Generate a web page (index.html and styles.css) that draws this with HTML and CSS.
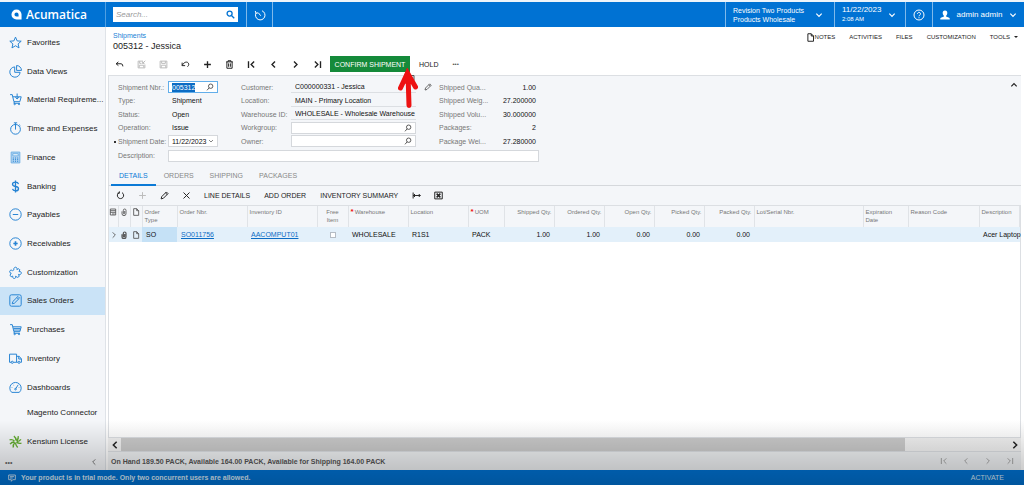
FILE: index.html
```html
<!DOCTYPE html>
<html lang="en">
<head>
<meta charset="utf-8">
<title>005312 - Jessica</title>
<link rel="stylesheet" href="styles.css">
</head>
<body>
<svg class="defs" aria-hidden="true">
  <symbol id="chev-down" viewBox="0 0 12 12"><path d="M2 4l4 4 4-4"/></symbol>
  <symbol id="chev-left" viewBox="0 0 12 12"><path d="M8 2L4 6l4 4"/></symbol>
  <symbol id="chev-right" viewBox="0 0 12 12"><path d="M4 2l4 4-4 4"/></symbol>
  <symbol id="first" viewBox="0 0 12 12"><path d="M2 1.500v9M9.500 2L5.500 6l4 4"/></symbol>
  <symbol id="last" viewBox="0 0 12 12"><path d="M10 1.500v9M2.500 2l4 4-4 4"/></symbol>
  <symbol id="plus" viewBox="0 0 12 12"><path d="M6 1.500v9M1.500 6h9"/></symbol>
  <symbol id="cross" viewBox="0 0 12 12"><path d="M2 2l8 8M10 2l-8 8"/></symbol>
  <symbol id="lens" viewBox="0 0 12 12"><circle cx="7" cy="4.800" r="3.300"/><path d="M4.700 7.200L1.500 11"/></symbol>
  <symbol id="page" viewBox="0 0 12 12"><path d="M2.500 1h4.500l3 3v7H2.500zM7 1v3h3"/></symbol>
  <symbol id="pencil" viewBox="0 0 12 12"><path d="M1.500 10.500l.8-3L8.500 1.300l2.200 2.200L4.500 9.700zM7.300 2.500l2.200 2.200"/></symbol>
  <symbol id="clip" viewBox="0 0 12 12"><path d="M3 5v3.500a3 3 0 0 0 6 0V3.500a2 2 0 0 0-4 0V8a1 1 0 0 0 2 0V4.500"/></symbol>
  <symbol id="cart" viewBox="0 0 24 24"><path d="M2 3h4l3 13h11l2.500-9H7M10 16l-1 3h11"/><circle cx="10.500" cy="20.500" r="1.200"/><circle cx="18.500" cy="20.500" r="1.200"/></symbol>
</svg>

<header class="topbar">
  <a class="brand" href="#">
    <svg class="brand-mark" viewBox="0 0 24 24"><path fill="#fff" fill-rule="evenodd" d="M12 1a11 11 0 0 1 11 11v11H12A11 11 0 0 1 12 1zm0 6.500a4.500 4.500 0 1 0 0 9h4.500V12A4.500 4.500 0 0 0 12 7.500z"/></svg>
    <span>Acumatica</span>
  </a>
  <form class="search">
    <input type="search" placeholder="Search..." aria-label="Search">
    <svg class="ico search-ico" viewBox="0 0 12 12"><circle cx="4.800" cy="4.800" r="3.300"/><path d="M7.300 7.300L11 11"/></svg>
  </form>
  <button class="bar-btn history" aria-label="History"><svg class="ico i12" viewBox="0 0 24 24"><path d="M4 8a9.500 9.500 0 1 0 12-4.500M2.500 4L4 8.500 8.500 7.500M9 8l4.500 5.500"/></svg></button>
  <span class="spacer"></span>
  <button class="bar-btn tenant"><span>Revision Two Products<br>Products Wholesale</span><svg class="ico bold i8"><use href="#chev-down"/></svg></button>
  <button class="bar-btn date"><span>11/22/2023<br><small>2:08 AM</small></span><svg class="ico bold i8"><use href="#chev-down"/></svg></button>
  <button class="bar-btn help" aria-label="Help"><svg class="ico i12" viewBox="0 0 24 24"><circle cx="12" cy="12" r="10"/><path d="M9 9.500a3 3 0 1 1 4.500 2.700c-1 .6-1.500 1-1.500 2.300M12 16.500v2"/></svg></button>
  <button class="bar-btn user"><svg class="i10" viewBox="0 0 24 24"><path fill="#fff" d="M12 1c4 0 6 3 5.500 6.500C17 11 15.500 13 14.500 14v1.500L22 18.500c1 .5 1.500 2 1.500 4.500H.5c0-2.500.5-4 1.500-4.500l7.500-3V14C8.500 13 7 11 6.500 7.500 6 4 8 1 12 1z"/></svg><span>admin admin</span><svg class="ico bold i8"><use href="#chev-down"/></svg></button>
</header>

<div class="shell">
  <nav class="side">
    <ul>
      <li><a href="#"><svg class="ico" viewBox="0 0 24 24"><path d="M12 2l3 7 7.500.6-5.700 5 1.700 7.400L12 18l-6.500 4 1.700-7.400-5.700-5L9 9z"/></svg>Favorites</a></li>
      <li><a href="#"><svg class="ico" viewBox="0 0 24 24"><path d="M10.500 3.500a9.500 9.500 0 1 0 10 10M10.500 3.500v10h10M14 1a9 9 0 0 1 9 9h-9z"/></svg>Data Views</a></li>
      <li><a href="#"><svg class="ico" viewBox="0 0 24 24"><use href="#cart"/><path d="M15 1v10M11.500 7.500L15 11l3.500-3.500"/></svg>Material Requireme...</a></li>
      <li><a href="#"><svg class="ico" viewBox="0 0 24 24"><circle cx="12" cy="13.500" r="9"/><path d="M9 1.500h6M12 2v12M19 5l2 2"/></svg>Time and Expenses</a></li>
      <li><a href="#"><svg class="ico" viewBox="0 0 24 24"><path fill="#b5d5f1" stroke="#6fb0e4" d="M4 2h16v20H4z"/><path fill="#f4f9fd" stroke="#6fb0e4" d="M7 5h10v4H7z"/><path d="M7 13h2m2 0h2m2 0h2M7 16h2m2 0h2m2 0h2M7 19h2m2 0h2m2 0h2"/></svg>Finance</a></li>
      <li><a href="#"><svg class="ico" viewBox="0 0 24 24"><path stroke-width="2.500" d="M12 1v22M17.500 7.500c-.5-2-2.500-3.500-5.500-3.500s-5.500 1.500-5.500 4 2 3.500 5.500 4 5.500 1.500 5.500 4-2.500 4-5.500 4-5-1.500-5.500-3.500"/></svg>Banking</a></li>
      <li><a href="#"><svg class="ico" viewBox="0 0 24 24"><circle cx="12" cy="12" r="10.500"/><path d="M7 12h10"/></svg>Payables</a></li>
      <li><a href="#"><svg class="ico" viewBox="0 0 24 24"><circle cx="12" cy="12" r="10.500"/><path d="M8 12h8M12 8v8" stroke-width="3"/></svg>Receivables</a></li>
      <li><a href="#"><svg class="ico" viewBox="0 0 24 24"><path d="M9 7c-1-4 3-6 5-4 1 1 1 2 .5 3.500L18 5l2 2-1.500 3.500c3-1 5 1 4 3.500s-4 2-5 1.500L19 19l-3 2-4-2c1 3-1 4.500-3 4s-2.500-2.500-2-4.500L4 20l-2-3 2-4c-3 0-3.500-3-2-4.500S6 7.500 6.500 9z"/></svg>Customization</a></li>
      <li class="current"><a href="#"><svg class="ico" viewBox="0 0 24 24"><rect x="1.500" y="1.500" width="21" height="21" rx="3"/><path d="M6 18l1-4 9.500-9.500 3 3L10 17zM14.500 6.500l3 3"/></svg>Sales Orders</a></li>
      <li><a href="#"><svg class="ico" viewBox="0 0 24 24"><use href="#cart"/><path d="M8 10h13M9 13h12"/></svg>Purchases</a></li>
      <li><a href="#"><svg class="ico" viewBox="0 0 24 24"><path d="M4 19H1V4h13v15H8M14 8h5l4 5v6h-2M14 19h2M18 8v5h5"/><circle cx="6" cy="19" r="2"/><circle cx="18.500" cy="19" r="2"/></svg>Inventory</a></li>
      <li><a href="#"><svg class="ico" viewBox="0 0 24 24"><path d="M5 21a10.500 10.500 0 1 1 14 0zM17 7l-4.500 7"/><circle cx="12" cy="15" r="1.500"/><path d="M5 12h1M8 7l.5 1M19 12h-1"/></svg>Dashboards</a></li>
      <li class="short"><a href="#">Magento Connector</a></li>
      <li class="tall"><a href="#"><svg class="ico kensium" viewBox="0 0 24 24"><path d="M13 10c0-4-1-6-4-8M14 11c3-3 4-5 3-9M14 12c4 0 6-1 8-4M14 13c3 3 5 3 9 2M12 14c0 4 1 6 4 9M11 14c-3 3-4 5-3 9M10 13c-4 0-6 1-8 4M10 11c-3-3-5-3-9-2"/></svg>Kensium License</a></li>
    </ul>
    <div class="side-foot"><button aria-label="More">•••</button><button aria-label="Collapse"><svg class="ico i8"><use href="#chev-left"/></svg></button></div>
  </nav>

  <main>
    <div class="heading">
      <div>
        <a class="crumb" href="#">Shipments</a>
        <h1>005312 - Jessica</h1>
      </div>
      <div class="links">
        <button><svg class="ico i9"><use href="#page"/></svg>NOTES</button>
        <button>ACTIVITIES</button>
        <button>FILES</button>
        <button>CUSTOMIZATION</button>
        <button>TOOLS <span class="caret"></span></button>
      </div>
    </div>

    <div class="tools">
      <button aria-label="Back"><svg class="ico" viewBox="0 0 12 12"><path d="M4.500 2.500L1.500 5l3 2.500M1.500 5H8q2.500 0 2.500 3.500"/></svg></button>
      <button aria-label="Save and close" disabled><svg class="ico" viewBox="0 0 12 12"><path d="M8 1.500H1.500v9h9V6M3.500 1.500v3H6M3 10V7h6v3M11 1L7.500 4.500M7.500 2v2.500H10"/></svg></button>
      <button aria-label="Save" disabled><svg class="ico" viewBox="0 0 12 12"><path d="M1.500 1.500h9v9h-9zM3.500 1.500v3h5v-3M3 10.500V7h6v3.500"/></svg></button>
      <button aria-label="Undo"><svg class="ico" viewBox="0 0 12 12"><path d="M1.500 3.500v4h4M1.500 7.500C4 2 9 1.500 10.200 5c.5 2-.7 3-1.700 4"/></svg></button>
      <button aria-label="Add"><svg class="ico bold"><use href="#plus"/></svg></button>
      <button aria-label="Delete"><svg class="ico" viewBox="0 0 12 12"><path d="M1.500 2.500h9M4 2.500V1h4v1.500M2.500 2.500V11h7V2.500M4.800 4.500V9M7.200 4.500V9"/></svg></button>
      <button aria-label="First"><svg class="ico bold"><use href="#first"/></svg></button>
      <button aria-label="Previous"><svg class="ico bold"><use href="#chev-left"/></svg></button>
      <button aria-label="Next"><svg class="ico bold"><use href="#chev-right"/></svg></button>
      <button aria-label="Last"><svg class="ico bold"><use href="#last"/></svg></button>
      <span class="confirm-wrap">
        <button class="confirm">CONFIRM SHIPMENT</button>
        <svg class="pointer" viewBox="0 0 20 42"><path d="M11 7.500h5v5" fill="none" stroke="#555"/><path d="M10 6l1 31.500M2.500 20L9.500 5l8 14" fill="none" stroke="#ed1212" stroke-width="5" stroke-linecap="round"/><path d="M9 0l8 15-14 1z" fill="#ed1212"/></svg>
      </span>
      <button class="text">HOLD</button>
      <button class="text more" aria-label="More actions">•••</button>
    </div>

    <form class="summary">
      <div class="fields">
        <label for="nbr">Shipment Nbr.:</label>
        <div class="box focus"><input id="nbr" value="005312"><svg class="ico i8"><use href="#lens"/></svg></div>
        <label class="c2" for="cust">Customer:</label>
        <div class="ro"><input id="cust" value="C000000331 - Jessica" readonly></div>
        <button class="edit" type="button" aria-label="Edit customer"><svg class="ico i8"><use href="#pencil"/></svg></button>
        <span class="c3">Shipped Qua...</span><output>1.00</output>

        <span class="c1">Type:</span><span class="value">Shipment</span>
        <label class="c2" for="loc">Location:</label>
        <div class="ro"><input id="loc" value="MAIN - Primary Location" readonly></div>
        <span class="c3">Shipped Weig...</span><output>27.200000</output>

        <span class="c1">Status:</span><span class="value">Open</span>
        <label class="c2" for="wh">Warehouse ID:</label>
        <div class="ro"><input id="wh" value="WHOLESALE - Wholesale Warehouse" readonly></div>
        <span class="c3">Shipped Volu...</span><output>30.000000</output>

        <span class="c1">Operation:</span><span class="value">Issue</span>
        <label class="c2" for="wg">Workgroup:</label>
        <div class="box"><input id="wg"><svg class="ico i8"><use href="#lens"/></svg></div>
        <span class="c3">Packages:</span><output>2</output>

        <label class="required" for="sdate">Shipment Date:</label>
        <div class="box"><input id="sdate" value="11/22/2023"><svg class="ico i6"><use href="#chev-down"/></svg></div>
        <label class="c2" for="own">Owner:</label>
        <div class="box"><input id="own"><svg class="ico i8"><use href="#lens"/></svg></div>
        <span class="c3">Package Wei...</span><output>27.280000</output>

        <label for="desc">Description:</label>
        <div class="box wide"><input id="desc"></div>
      </div>
      <button class="fold" type="button" aria-label="Collapse summary"><svg class="ico bold i8" viewBox="0 0 12 12"><path d="M2 8l4-4 4 4"/></svg></button>
    </form>

    <div class="tabs" role="tablist">
      <button role="tab" aria-selected="true">DETAILS</button>
      <button role="tab" aria-selected="false">ORDERS</button>
      <button role="tab" aria-selected="false">SHIPPING</button>
      <button role="tab" aria-selected="false">PACKAGES</button>
    </div>

    <div class="tools grid-tools">
      <button aria-label="Refresh"><svg class="ico" viewBox="0 0 12 12"><path d="M8 2.200A4.200 4.200 0 1 1 4 2.200M4.500 .5v2.500H2"/></svg></button>
      <button aria-label="Add row" disabled><svg class="ico"><use href="#plus"/></svg></button>
      <button aria-label="Edit row"><svg class="ico"><use href="#pencil"/></svg></button>
      <button aria-label="Delete row"><svg class="ico"><use href="#cross"/></svg></button>
      <button class="text">LINE DETAILS</button>
      <button class="text">ADD ORDER</button>
      <button class="text">INVENTORY SUMMARY</button>
      <button aria-label="Fit columns"><svg class="ico" viewBox="0 0 12 12"><path d="M1.500 2v8M2 6h9M4 4L2 6l2 2M9 4l2 2-2 2"/></svg></button>
      <button aria-label="Export to Excel"><svg class="ico" viewBox="0 0 12 12"><path d="M1 1.500h10v9H1z"/><path stroke-width="2" d="M3.500 3.500l5 5M8.500 3.500l-5 5"/></svg></button>
    </div>

    <div class="grid">
      <table>
        <colgroup><col class="w9"><col class="w12"><col class="w12"><col class="w35"><col class="w70"><col class="w70"><col class="w31"><col class="w60"><col class="w60"><col class="w36"><col class="w50"><col class="w50"><col class="w50"><col class="w50"><col class="w50"><col class="w109"><col class="w45"><col class="w71"><col></colgroup>
        <thead><tr>
          <th class="mini"><svg class="ico i8" viewBox="0 0 12 12"><path d="M2 1.500h8v9H2zM2 4h8M2 6.500h8M4.500 9h4"/></svg></th>
          <th class="mini"><svg class="ico i8"><use href="#clip"/></svg></th>
          <th class="mini"><svg class="ico i8"><use href="#page"/></svg></th>
          <th>Order<br>Type</th><th>Order Nbr.</th><th>Inventory ID</th><th class="mid">Free<br>Item</th>
          <th><b>*</b>Warehouse</th><th>Location</th><th><b>*</b>UOM</th>
          <th class="num">Shipped Qty.</th><th class="num">Ordered Qty.</th><th class="num">Open Qty.</th><th class="num">Picked Qty.</th><th class="num">Packed Qty.</th>
          <th>Lot/Serial Nbr.</th><th>Expiration<br>Date</th><th>Reason Code</th><th>Description</th>
        </tr></thead>
        <tbody><tr>
          <td class="mini"><svg class="ico i8"><use href="#chev-right"/></svg></td>
          <td class="mini"><svg class="ico bold i8"><use href="#clip"/></svg></td>
          <td class="mini"><svg class="ico i8"><use href="#page"/></svg></td>
          <td class="cell-on">SO</td><td><a href="#">SO011756</a></td><td><a href="#">AACOMPUT01</a></td>
          <td class="mid"><input type="checkbox" aria-label="Free item"></td>
          <td>WHOLESALE</td><td>R1S1</td><td>PACK</td>
          <td class="num">1.00</td><td class="num">1.00</td><td class="num">0.00</td><td class="num">0.00</td><td class="num">0.00</td>
          <td></td><td></td><td></td><td class="last">Acer Laptop</td>
        </tr></tbody>
      </table>
    </div>

    <div class="scroll">
      <button aria-label="Scroll left"><svg class="ico bold i10"><use href="#chev-left"/></svg></button>
      <div class="track"><div class="thumb"></div></div>
      <button aria-label="Scroll right"><svg class="ico bold i10"><use href="#chev-right"/></svg></button>
    </div>
    <div class="status">
      <span>On Hand 189.50 PACK, Available 164.00 PACK, Available for Shipping 164.00 PACK</span>
      <div class="pager">
        <button aria-label="First page" disabled><svg class="ico i8"><use href="#first"/></svg></button>
        <button aria-label="Previous page" disabled><svg class="ico i8"><use href="#chev-left"/></svg></button>
        <button aria-label="Next page" disabled><svg class="ico i8"><use href="#chev-right"/></svg></button>
        <button aria-label="Last page" disabled><svg class="ico i8"><use href="#last"/></svg></button>
      </div>
    </div>
  </main>
</div>

<footer class="trial">
  <svg class="ico i8" viewBox="0 0 12 12"><path d="M1 1.500h10v7H7L5 11V8.500H1zM3 4h6M3 6h4"/></svg>
  <span>Your product is in trial mode. Only two concurrent users are allowed.</span>
  <button>ACTIVATE</button>
</footer>
<div class="shade"></div>
</body>
</html>
```
FILE: styles.css
```css
* { box-sizing: border-box; }

body {
  margin: 0;
  height: 100vh;
  display: flex;
  flex-direction: column;
  border-top: 2px solid #eef4fa;
  background: #f4f6f9;
  color: #222;
  font: 7px/9px "Liberation Sans", Arial, sans-serif;
}

button, input { font: inherit; color: inherit; }
button { margin: 0; padding: 0; border: 0; background: none; }
a { color: inherit; text-decoration: none; }
.defs { position: absolute; width: 0; height: 0; }
.ico { width: 9px; height: 9px; flex: none; fill: none; stroke: currentColor; stroke-width: 1.3; }
.bold { stroke-width: 1.8; }
.i6 { width: 6px; height: 6px; }
.i8 { width: 8px; height: 8px; }
.i9 { width: 9px; height: 9px; }
.i10 { width: 10px; height: 10px; }
.i12 { width: 12px; height: 12px; stroke-width: 2; }

/* Top bar */
.topbar { display: flex; flex: none; height: 25px; background: #0072d3; color: #fff; }
.brand { display: flex; align-items: center; gap: 4px; width: 106px; padding-left: 11px; border-right: 1px solid #4f9fe2; font: 600 12px/14px "Open Sans", sans-serif; }
.brand-mark { width: 11px; height: 11px; }
.search { display: flex; align-items: center; width: 125px; height: 15px; margin: 5px 8px 0 7px; background: #fff; color: #777; }
.search input { flex: 1; min-width: 0; height: 15px; padding: 0 3px; border: 0; background: none; font-size: 8px; font-style: italic; outline: 0; }
.search input::placeholder { color: #999; }
.search .search-ico { margin-right: 3px; color: #0072d3; stroke-width: 1.8; }
.spacer { flex: 1; }
.bar-btn { display: flex; align-items: center; justify-content: space-between; border-left: 1px solid #7fb9ea; text-align: left; line-height: 9px; }
.history { width: 27px; justify-content: center; border-right: 1px solid #7fb9ea; }
.tenant { width: 109px; padding: 0 11px 0 7px; }
.date { width: 71px; padding: 0 9px 0 7px; font-size: 8px; }
.date small { font-size: 6px; }
.help { width: 27px; justify-content: center; }
.user { width: 92px; padding: 0 7px; font-size: 8px; }

/* Sidebar */
.shell { display: flex; flex: 1; min-height: 0; }
.side { display: flex; flex: none; flex-direction: column; width: 106px; border-right: 1px solid #dfe3e8; }
.side ul { display: flex; flex: 1; flex-direction: column; min-height: 0; margin: 0; padding: 1px 0 0; list-style: none; }
.side li { display: flex; flex: 0 1 29px; font-size: 8px; }
.side li.short { flex-basis: 23px; padding-left: 18px; }
.side li.tall { flex-basis: 34px; }
.side a { display: flex; flex: 1; align-items: center; gap: 5px; padding-left: 9px; white-space: nowrap; }
.side a .ico { width: 13px; height: 13px; color: #2583d3; stroke-width: 1.8; }
.side a .kensium { color: #64ad32; stroke-width: 2.6; }
.side .current { background: #cae3f7; }
.side-foot { display: flex; justify-content: space-between; align-items: flex-start; height: 12px; padding: 0 7px 0 5px; color: #666; }

/* Page heading */
main { display: flex; flex: 1; flex-direction: column; min-width: 0; padding: 0 3px 0 2px; background: #fff; }
.heading { display: flex; justify-content: space-between; padding: 4px 3px 0 5px; }
.crumb { color: #1a7fd6; }
h1 { margin: 0; font: 9px/13px "Liberation Sans", Arial, sans-serif; }
.links { display: flex; gap: 14px; height: 12px; font-size: 6px; }
.links button { display: flex; align-items: center; }
.caret { margin: 2px 0 0 4px; border: 2px solid transparent; border-top-color: #222; }

/* Toolbars */
.tools { display: flex; align-items: center; height: 22px; }
.tools button { display: flex; justify-content: center; align-items: center; width: 22px; height: 16px; }
.tools button:disabled { color: #bbb; }
.tools .text { width: auto; margin: 0 7px; }
.tools .more { font-size: 6px; color: #555; }
.confirm-wrap { position: relative; margin: 0 2px; }
.tools .confirm { width: 80px; background: #158a3a; color: #fff; }
.pointer { position: absolute; z-index: 2; top: 12px; right: -8px; width: 20px; height: 42px; }

/* Summary form */
.summary { display: flex; justify-content: space-between; align-items: flex-start; padding: 4px 3px 0 9px; border: 1px solid #dcdfe3; border-width: 1px 0 0 1px; background: #f4f6f9; }
.fields { display: grid; grid-template-columns: 50px 50px 23px 50px 125px 23px 48px 52px; grid-template-rows: 14px 13px 14px 13px 14px 15px; align-items: center; color: #777; white-space: nowrap; }
.fields > label, .c1 { grid-column: 1; }
.fields > .c2 { grid-column: 4; }
.c3 { grid-column: 7; }
.required { position: relative; }
.required::before { content: ""; position: absolute; top: 4px; left: -4px; width: 2px; height: 2px; background: #333; }
.fields input { flex: 1; width: 0; height: 9px; padding: 0; border: 0; background: none; color: #111; outline: 0; }
.fields .value { padding-left: 4px; color: #111; }
.fields output { padding-right: 3px; text-align: right; color: #111; }
.box { display: flex; align-items: center; height: 12px; padding: 0 3px; border: 1px solid #d5d8dc; background: #fff; color: #444; }
.focus { border-color: #2c8ede; outline: 1px solid #62aeea; outline-offset: -1px; }
.fields .focus input { flex: 0 0 23px; background: #0b6cc4; color: #fff; }
.focus .ico { margin-left: auto; }
.wide { grid-column: 2 / -1; }
.ro { display: flex; align-items: center; height: 12px; padding-left: 4px; border-bottom: 1px solid #dcdfe3; }
.edit { display: flex; justify-content: center; color: #555; }
.fold { padding-top: 1px; }

/* Tabs */
.tabs { display: flex; height: 23px; padding-left: 2px; border-bottom: 1px solid #d5d8dc; border-left: 1px solid #dcdfe3; background: #f4f6f9; color: #888; }
.tabs button { height: 23px; padding: 4px 8px 0; border-bottom: 2px solid transparent; }
.tabs [aria-selected="true"] { border-bottom-color: #0b7ad6; color: #0b7ad6; }
.grid-tools { height: 19px; border-left: 1px solid #dcdfe3; background: #f4f6f9; }

/* Detail grid */
.grid { flex: 1; min-height: 0; border: 1px solid #dcdfe3; }
table { width: 100%; border-collapse: collapse; table-layout: fixed; }
.w9 { width: 9px; } .w12 { width: 12px; } .w31 { width: 31px; } .w35 { width: 35px; }
.w36 { width: 36px; } .w45 { width: 45px; } .w50 { width: 50px; } .w60 { width: 60px; }
.w70 { width: 70px; } .w71 { width: 71px; } .w109 { width: 109px; }
th { height: 21px; padding: 2px 2px 0; border-right: 1px solid #e0e3e7; background: #f4f6f9; color: #777; font: 6px/8px "Liberation Sans", Arial, sans-serif; text-align: left; vertical-align: top; white-space: nowrap; }
th b { margin-right: 1px; color: #e11; font-size: 8px; line-height: 6px; }
td { height: 15px; padding: 0 4px; background: #e3f0fa; color: #111; white-space: nowrap; }
td a { color: #0b6cc4; text-decoration: underline; }
.mini { padding-right: 0; padding-left: 0; text-align: center; color: #555; }
.mini .ico { display: block; margin: 0 auto; }
.mid { text-align: center; }
.num { text-align: right; }
.cell-on { background: #c5e1f6; }
.last { padding-right: 0; }
td input { display: block; width: 6px; height: 6px; margin: 0 auto; appearance: none; border: 1px solid #b5bcc4; background: #fff; }

/* Scroll bar and status */
.scroll { display: flex; flex: none; height: 14px; background: #f2f2f2; border-bottom: 1px solid #dcdfe3; }
.scroll button { display: flex; justify-content: center; align-items: center; width: 13px; }
.track { display: flex; flex: 1; }
.thumb { width: 88.4%; background: #cbcbcb; }
.status { display: flex; flex: none; justify-content: space-between; align-items: center; height: 18px; padding-left: 3px; background: #f0f2f4; color: #555; font-weight: bold; }
.pager { display: flex; }
.pager button { display: flex; justify-content: center; width: 22px; color: #999; }

.trial { display: flex; flex: none; align-items: center; gap: 5px; height: 15px; padding: 0 20px 0 8px; background: #0072d3; color: #d8e9f7; font-weight: bold; }
.trial button { margin-left: auto; font-weight: normal; }

.shade { position: absolute; right: 0; bottom: 0; left: 0; height: 65px; pointer-events: none; background: linear-gradient(rgba(0,0,0,0), rgba(0,0,0,.16) 62%, rgba(0,0,0,.25)); }
```
